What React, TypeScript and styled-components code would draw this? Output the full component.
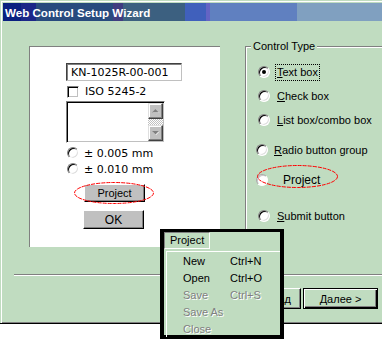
import React from 'react'
import styled, { createGlobalStyle } from 'styled-components'

const GREEN = '#c0dcc0'

const GlobalStyle = createGlobalStyle`
  html, body { margin: 0; padding: 0; background: #fff; }
  body { font-family: "Liberation Sans", Arial, sans-serif; font-size: 11px; color: #000; }
`

const Screen = styled.div`
  position: relative;
  width: 382px;
  height: 339px;
  overflow: hidden;
  background: #fff;
`

const Window = styled.div`
  width: 382px;
  height: 324px;
  box-sizing: border-box;
  background: ${GREEN};
  border-bottom: 1px solid #000;
  box-shadow: inset 1px 1px 0 ${GREEN}, inset 2px 2px 0 #fff, inset 0 -1px 0 #808080;
  padding: 3px 0 0 3px;
  display: flex;
  flex-direction: column;
`

// dithered 256-colour title gradient
const TitleBar = styled.div`
  height: 18px;
  display: flex;
  align-items: center;
  padding-left: 2px;
  color: #fff;
  font-weight: bold;
  font-size: 11.6px;
  background: linear-gradient(to right,
    #0a2080 0 18px, #1c2688 18px 33px, #284a7e 33px 110px, #403c80 110px 120px,
    #3c6080 120px 182px, #4060bc 182px 203px, #6464c4 203px 207px,
    #6080c0 207px 294px, #80a0c0 294px);
`

const Main = styled.div`
  display: flex;
  align-items: flex-start;
  gap: 25px;
  padding: 25px 0 0 26px;
`

/* ---------- left preview panel ---------- */

const Preview = styled.div`
  width: 191px;
  height: 201px;
  box-sizing: border-box;
  background: #fff;
  border-top: 1px solid #808080;
  border-left: 1px solid #808080;
  padding: 16px 0 0 36px;
  display: flex;
  flex-direction: column;
  align-items: flex-start;
  font-family: "DejaVu Sans", Verdana, sans-serif;
  font-size: 11px;
`

const TextField = styled.div`
  width: 116px;
  height: 18px;
  box-sizing: border-box;
  border: 1px solid;
  border-color: #404040 #c0c0c0 #c0c0c0 #404040;
  box-shadow: inset 1px 1px 0 #808080;
  padding: 2px 0 0 4px;
  line-height: 13px;
`

const CheckRow = styled.div`
  display: flex;
  align-items: center;
  gap: 6px;
  margin: 5px 0 0 1px;
  height: 12px;
  line-height: 12px;
`

const CheckBox = styled.span`
  width: 12px;
  height: 12px;
  box-sizing: border-box;
  border: 1px solid;
  border-color: #808080 #fff #fff #808080;
  box-shadow: inset 1px 1px 0 #000, inset -1px -1px 0 #c0c0c0;
  background: #fff;
`

const ListBox = styled.div`
  display: flex;
  width: 99px;
  height: 42px;
  box-sizing: border-box;
  margin-top: 3px;
  padding: 1px;
  border: 1px solid;
  border-color: #808080 #fff #fff #808080;
  box-shadow: inset 1px 1px 0 #000, inset -1px -1px 0 #c0c0c0;
`

const ListArea = styled.div`
  flex: 1;
`

const ScrollBar = styled.div`
  width: 15px;
  display: flex;
  flex-direction: column;
`

const ScrollBtn = styled.div`
  height: 16px;
  box-sizing: border-box;
  background: #c0c0c0;
  border: 1px solid;
  border-color: #dfdfdf #404040 #404040 #dfdfdf;
  box-shadow: inset -1px -1px 0 #808080, inset 1px 1px 0 #fff;
  display: flex;
  align-items: center;
  justify-content: center;
`

const ScrollTrack = styled.div`
  flex: 1;
  background: repeating-conic-gradient(#c0c0c0 0 25%, #fff 0 50%) 0 0 / 2px 2px;
`

const Arrow = ({ down }: { down?: boolean }) => (
  <svg width="9" height="6" viewBox="0 0 9 6">
    <polygon points={down ? '1.5,1.5 8.5,1.5 5,5' : '1.5,5 8.5,5 5,1.5'} fill="#fff" />
    <polygon points={down ? '1,1 8,1 4.5,4.5' : '1,4.5 8,4.5 4.5,1'} fill="#808080" />
  </svg>
)

const RadioRow = styled.div<{ $top: number; $indent: number; $gap: number }>`
  display: flex;
  align-items: center;
  gap: ${p => p.$gap}px;
  margin: ${p => p.$top}px 0 0 ${p => p.$indent}px;
  height: 14px;
`

const Radio = styled.span<{ $checked?: boolean; $faded?: boolean }>`
  display: inline-flex;
  align-items: center;
  justify-content: center;
  flex: none;
  width: 12px;
  height: 12px;
  box-sizing: border-box;
  border-radius: 50%;
  border: 1px solid;
  border-color: ${p => (p.$faded ? '#a8a8a8 #fff #fff #a8a8a8' : '#808080 #fff #fff #808080')};
  background: #fff;
  box-shadow: ${p => (p.$faded ? 'inset 1px 1px 0 #c8c8c8' : 'inset 1px 1px 0 #000, inset -1px -1px 0 #dfdfdf')};
  &::after {
    content: '';
    display: ${p => (p.$checked ? 'block' : 'none')};
    width: 4px;
    height: 4px;
    border-radius: 50%;
    background: #000;
  }
`

const Marked = styled.div<{ $top: number; $left: number }>`
  position: relative;
  margin: ${p => p.$top}px 0 0 ${p => p.$left}px;
`

const Ellipse = styled.svg<{ $x: number; $y: number }>`
  position: absolute;
  left: ${p => p.$x}px;
  top: ${p => p.$y}px;
  overflow: visible;
  pointer-events: none;
`

const RedOval = ({ x, y, w, h }: { x: number; y: number; w: number; h: number }) => (
  <Ellipse $x={x} $y={y} width={w} height={h}>
    <ellipse cx={w / 2} cy={h / 2} rx={w / 2 - 0.5} ry={h / 2 - 0.5}
      fill="none" stroke="#ff0000" strokeWidth="1" strokeDasharray="4 1" />
  </Ellipse>
)

const GreyButton = styled.div<{ $h: number }>`
  width: 61px;
  height: ${p => p.$h}px;
  box-sizing: border-box;
  background: #c0c0c0;
  border: 1px solid;
  border-color: #fff #000 #000 #fff;
  box-shadow: inset -1px -1px 0 #808080;
  display: flex;
  align-items: center;
  justify-content: center;
  font-family: "Liberation Sans", Arial, sans-serif;
  font-size: 11px;
`

const OkButton = styled(GreyButton)`
  margin: 8px 0 0 17px;
  font-size: 12px;
`

/* ---------- right group box ---------- */

const GroupBox = styled.div`
  flex: 1;
  height: 202px;
  box-sizing: border-box;
  border-top: 1px solid #808080;
  border-left: 1px solid #808080;
  box-shadow: inset 1px 1px 0 #fff;
  display: flex;
  flex-direction: column;
  align-items: flex-start;
`

const GroupTitle = styled.div`
  margin: -8px 0 0 5px;
  padding: 0 2px;
  background: ${GREEN};
  line-height: 14px;
  height: 14px;
`

const Option = styled.div<{ $top: number; $indent: number; $gap: number }>`
  display: flex;
  align-items: center;
  gap: ${p => p.$gap}px;
  height: 16px;
  margin: ${p => p.$top}px 0 0 ${p => p.$indent}px;
  position: relative;
`

const OptionLabel = styled.span<{ $focused?: boolean; $big?: boolean }>`
  padding: 1px 1px;
  line-height: 13px;
  border: 1px dotted ${p => (p.$focused ? '#000' : 'transparent')};
  font-size: ${p => (p.$big ? 12 : 11)}px;
  white-space: nowrap;
`

/* ---------- footer ---------- */

const Separator = styled.div`
  margin: 26px 0 0 11px;
  border-top: 1px solid #808080;
  border-bottom: 1px solid #fff;
`

const ButtonRow = styled.div`
  display: flex;
  justify-content: flex-end;
  gap: 2px;
  margin-top: 12px;
  padding-right: 4px;
`

const WizardButton = styled.div<{ $default?: boolean; $shift?: number }>`
  width: 75px;
  height: 21px;
  box-sizing: border-box;
  display: flex;
  align-items: center;
  justify-content: center;
  padding-left: ${p => p.$shift ?? 0}px;
  background: ${GREEN};
  border: 1px solid;
  border-color: ${p => (p.$default ? '#000' : '#fff #000 #000 #fff')};
  box-shadow: ${p => (p.$default
    ? 'inset 1px 1px 0 #fff, inset -1px -1px 0 #000, inset -2px -2px 0 #808080'
    : 'inset -1px -1px 0 #808080')};
  font-size: 11px;
`

/* ---------- popup menu overlay ---------- */

const MenuPopup = styled.div`
  position: absolute;
  left: 160px;
  top: 229px;
  width: 124px;
  height: 110px;
  box-sizing: border-box;
  border: 4px solid #000;
  border-top-width: 3px;
  background: ${GREEN};
  display: flex;
  flex-direction: column;
  align-items: flex-start;
  font-size: 11px;
`

const MenuTitle = styled.div`
  width: 46px;
  height: 17px;
  box-sizing: border-box;
  border: 1px solid;
  border-color: #808080 #fff #fff #808080;
  padding-left: 5px;
  line-height: 15px;
`

const SubMenu = styled.div`
  align-self: stretch;
  flex: 1;
  margin: 2px 0 0 2px;
  border-top: 1px solid #fff;
  border-left: 1px solid #fff;
  padding: 0 0 0 16px;
  display: grid;
  grid-template-columns: 47px auto;
  grid-auto-rows: 17px;
  align-items: center;
`

const MenuText = styled.span<{ $disabled?: boolean }>`
  color: ${p => (p.$disabled ? '#808080' : '#000')};
  text-shadow: ${p => (p.$disabled ? '1px 1px 0 #fff' : 'none')};
  white-space: nowrap;
`

const menuItems = [
  { label: 'New', key: 'Ctrl+N' },
  { label: 'Open', key: 'Ctrl+O' },
  { label: 'Save', key: 'Ctrl+S', disabled: true },
  { label: 'Save As', key: '', disabled: true },
  { label: 'Close', key: '', disabled: true },
]

const App: React.FC = () => {
  return (
    <Screen>
      <GlobalStyle />
      <Window>
        <TitleBar>Web Control Setup Wizard</TitleBar>

        <Main>
          {/* preview of the control */}
          <Preview>
            <TextField>KN-1025R-00-001</TextField>
            <CheckRow>
              <CheckBox />
              <span>ISO 5245-2</span>
            </CheckRow>
            <ListBox>
              <ListArea />
              <ScrollBar>
                <ScrollBtn><Arrow /></ScrollBtn>
                <ScrollTrack />
                <ScrollBtn><Arrow down /></ScrollBtn>
              </ScrollBar>
            </ListBox>
            <RadioRow $top={3} $indent={1} $gap={5}>
              <Radio />
              <span>± 0.005 mm</span>
            </RadioRow>
            <RadioRow $top={2} $indent={1} $gap={5}>
              <Radio />
              <span>± 0.010 mm</span>
            </RadioRow>
            <Marked $top={8} $left={18}>
              <GreyButton $h={18}>Project</GreyButton>
              <RedOval x={-10} y={-2} w={80} h={22} />
            </Marked>
            <OkButton $h={19}>OK</OkButton>
          </Preview>

          {/* control type */}
          <GroupBox>
            <GroupTitle>Control Type</GroupTitle>
            <Option $top={11} $indent={12} $gap={5}>
              <Radio $checked />
              <OptionLabel $focused><u>T</u>ext box</OptionLabel>
            </Option>
            <Option $top={8} $indent={12} $gap={5}>
              <Radio />
              <OptionLabel><u>C</u>heck box</OptionLabel>
            </Option>
            <Option $top={8} $indent={12} $gap={5}>
              <Radio />
              <OptionLabel><u>L</u>ist box/combo box</OptionLabel>
            </Option>
            <Option $top={14} $indent={10} $gap={4}>
              <Radio />
              <OptionLabel><u>R</u>adio button group</OptionLabel>
            </Option>
            <Option $top={14} $indent={10} $gap={13}>
              <Radio $faded />
              <OptionLabel $big>Project</OptionLabel>
              <RedOval x={1} y={-7} w={81} h={23} />
            </Option>
            <Option $top={20} $indent={12} $gap={5}>
              <Radio />
              <OptionLabel><u>S</u>ubmit button</OptionLabel>
            </Option>
          </GroupBox>
        </Main>

        <Separator />
        <ButtonRow>
          <WizardButton $shift={14}>&lt; Назад</WizardButton>
          <WizardButton $default>Далее &gt;</WizardButton>
        </ButtonRow>
      </Window>

      <MenuPopup>
        <MenuTitle>Project</MenuTitle>
        <SubMenu>
          {menuItems.map(item => (
            <React.Fragment key={item.label}>
              <MenuText $disabled={item.disabled}>{item.label}</MenuText>
              <MenuText $disabled={item.disabled}>{item.key}</MenuText>
            </React.Fragment>
          ))}
        </SubMenu>
      </MenuPopup>
    </Screen>
  )
}

export default App
